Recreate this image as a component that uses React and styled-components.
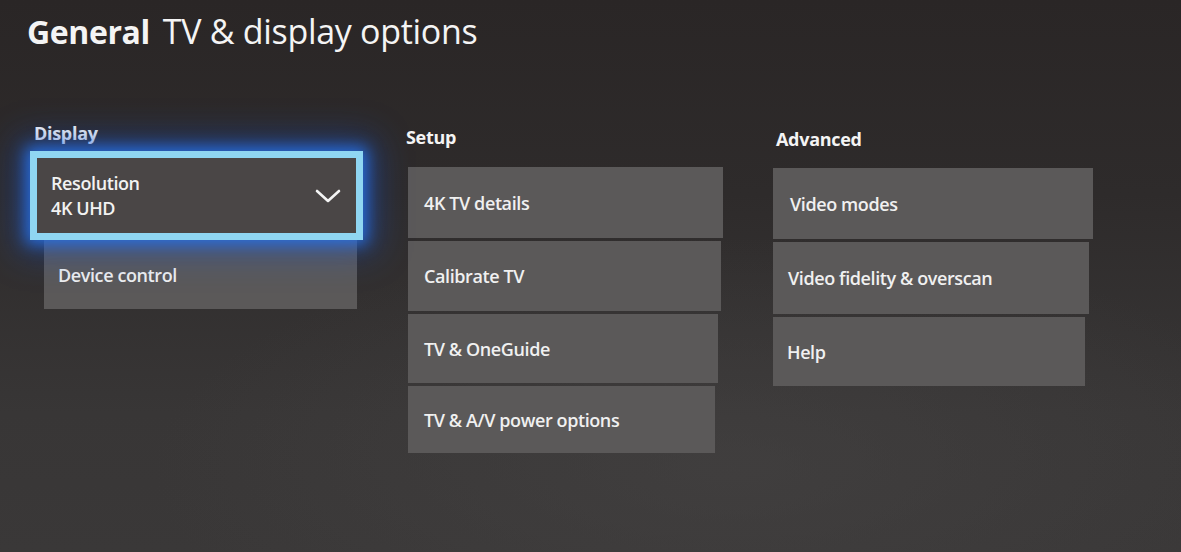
import React from "react";
import styled, { createGlobalStyle } from "styled-components";

const Global = createGlobalStyle`
  html, body { margin: 0; padding: 0; background: #2c2929; }
  * { box-sizing: border-box; }
`;

const Screen = styled.div`
  width: 1181px;
  height: 552px;
  overflow: hidden;
  font-family: "Open Sans", "Noto Sans", sans-serif;
  color: #f2f2f2;
  background:
    radial-gradient(ellipse 70% 60% at 62% 85%, rgba(70, 68, 68, 0.55), rgba(0, 0, 0, 0) 70%),
    linear-gradient(180deg, #2a2626 0%, #2e2b2b 35%, #383636 75%, #3a3838 100%);
`;

const Header = styled.h1`
  margin: 0;
  padding: 8px 0 0 27px;
  font-size: 34px;
  font-weight: 400;
  letter-spacing: -0.3px;
  line-height: 46px;
  color: #f4f4f4;
`;

const Strong = styled.span`
  font-size: 32px;
  font-weight: 700;
  margin-right: 13px;
  letter-spacing: -0.4px;
`;

const Columns = styled.div`
  display: grid;
  grid-template-columns: 376px 367px 320px;
  padding-left: 30px;
  margin-top: 66px;
  align-items: start;
`;

const Column = styled.section`
  display: flex;
  flex-direction: column;
  width: ${(p) => p.$width}px;
  margin-top: ${(p) => p.$offset || 0}px;
`;

const Heading = styled.h2`
  margin: 0 0 ${(p) => p.$gap}px ${(p) => p.$indent}px;
  font-size: 18px;
  font-weight: 700;
  letter-spacing: -0.3px;
  line-height: 24px;
  color: #f4f4f4;
`;

const Stack = styled.div`
  display: flex;
  flex-direction: column;
  gap: 3px;
  margin-left: ${(p) => p.$indent || 0}px;
`;

const Tile = styled.div`
  display: flex;
  align-items: center;
  width: ${(p) => p.$width}px;
  height: ${(p) => p.$height || 70}px;
  padding-left: ${(p) => p.$pad || 16}px;
  background: #5b5959;
  font-size: 18px;
  font-weight: 600;
  letter-spacing: -0.4px;
  color: #f0f0f0;
`;

const Focus = styled.div`
  width: 333px;
  height: 89px;
  border: 7px solid #8fd6f2;
  box-shadow:
    0 0 14px 4px rgba(40, 115, 235, 0.85),
    0 0 34px 12px rgba(25, 85, 210, 0.45);
  position: relative;
  z-index: 1;
`;

const FocusInner = styled.div`
  display: flex;
  align-items: center;
  justify-content: space-between;
  height: 100%;
  padding: 0 15px 0 14px;
  background: #4a4646;
`;

const Lines = styled.div`
  display: flex;
  flex-direction: column;
  font-size: 18px;
  font-weight: 600;
  letter-spacing: -0.4px;
  line-height: 25px;
  color: #f2f2f2;
`;

const Chevron = () => (
  <svg width="26" height="14" viewBox="0 0 26 14" fill="none">
    <path d="M2 2 L13 12 L24 2" stroke="#f4f4f4" strokeWidth="2.6" strokeLinecap="round" strokeLinejoin="round" />
  </svg>
);

export default function App() {
  return (
    <>
      <Global />
      <Screen>
        <Header>
          <Strong>General</Strong>TV &amp; display options
        </Header>
        <Columns>
          <Column $width={333}>
            <Heading $indent={4} $gap={6}>Display</Heading>
            <Focus>
              <FocusInner>
                <Lines>
                  <span>Resolution</span>
                  <span>4K UHD</span>
                </Lines>
                <Chevron />
              </FocusInner>
            </Focus>
            <Stack $indent={14}>
              <Tile $width={313} $height={69} $pad={14}>Device control</Tile>
            </Stack>
          </Column>
          <Column $width={317} $offset={4}>
            <Heading $indent={0} $gap={18}>Setup</Heading>
            <Stack $indent={2}>
              <Tile $width={315} $height={71}>4K TV details</Tile>
              <Tile $width={313} $height={70}>Calibrate TV</Tile>
              <Tile $width={310} $height={69}>TV &amp; OneGuide</Tile>
              <Tile $width={307} $height={67}>TV &amp; A/V power options</Tile>
            </Stack>
          </Column>
          <Column $width={320} $offset={6}>
            <Heading $indent={3} $gap={17}>Advanced</Heading>
            <Stack>
              <Tile $width={320} $height={71} $pad={17}>Video modes</Tile>
              <Tile $width={316} $height={72} $pad={15}>Video fidelity &amp; overscan</Tile>
              <Tile $width={312} $height={69} $pad={14}>Help</Tile>
            </Stack>
          </Column>
        </Columns>
      </Screen>
    </>
  );
}
